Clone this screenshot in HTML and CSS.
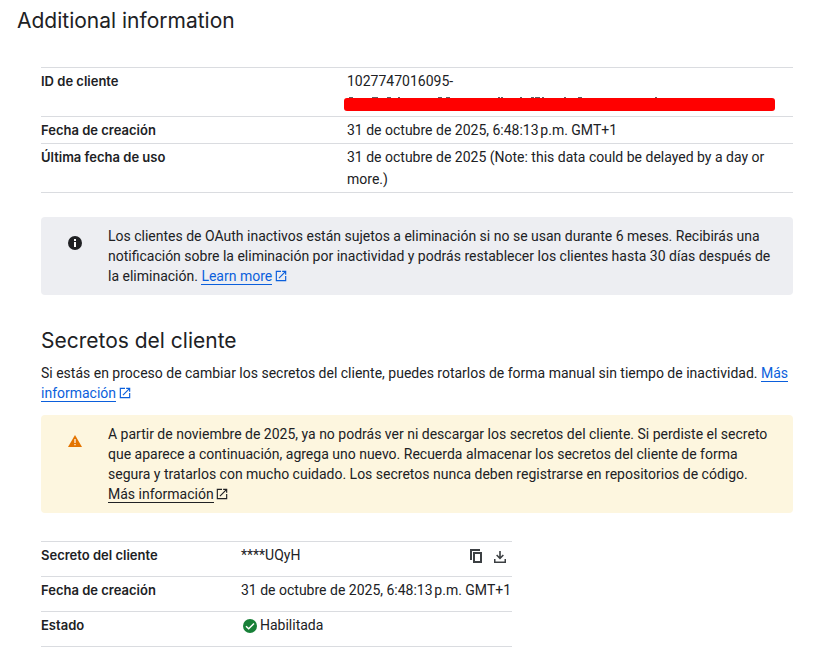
FILE: index.html
```html
<!DOCTYPE html>
<html lang="es">
<head>
<meta charset="utf-8">
<meta name="viewport" content="width=device-width, initial-scale=1">
<title>Additional information</title>
<link rel="stylesheet" href="styles.css">
</head>
<body>
<svg class="sprite" aria-hidden="true">
  <symbol id="open" viewBox="0 0 24 24"><path d="M19 19H5V5h7V3H3v18h18v-9h-2zM14 3v2h3.600l-9.800 9.800 1.400 1.400L19 6.400V10h2V3z"/></symbol>
</svg>
<main class="page">
  <h1 class="title">Additional information</h1>
  <div class="content">
    <table class="details">
      <tr>
        <th scope="row">ID de cliente</th>
        <td>
          <span class="line">1027747016095-</span>
          <svg class="redacted" viewBox="0 0 431 16" preserveAspectRatio="none" aria-label="Oculto">
            <path fill="#5f6063" d="M5 2h4v1H5zM28 2h6v1h-6zM43 2h4v1h-4zM54 2h2v1h-2zM94 2h4v1h-4zM102 2h4v1h-4zM154 2h2v1h-2zM157 2h2v1h-2zM176 2h2v1h-2zM187 2h3v1h-3zM191 2h5v1h-5zM198 2h2v1h-2zM220 2h2v1h-2zM234 2h4v1h-4zM311 2h2v1h-2z"/>
            <rect y="3" width="431" height="13" rx="3" fill="#f00"/>
          </svg>
        </td>
      </tr>
      <tr>
        <th scope="row">Fecha de creación</th>
        <td>31 de octubre de 2025, 6:48:13&#8239;p.m. GMT+1</td>
      </tr>
      <tr>
        <th scope="row">Última fecha de uso</th>
        <td>31 de octubre de 2025 (Note: this data could be delayed by a day or more.)</td>
      </tr>
    </table>

    <aside class="notice info">
      <svg class="notice-icon" viewBox="0 0 14 14" aria-hidden="true"><circle cx="7" cy="7" r="7" fill="#202124"/><path fill="#fff" d="M6 3h2v2H6zM6 6h2v5H6z"/></svg>
      <p>Los clientes de OAuth inactivos están sujetos a eliminación si no se usan durante 6 meses. Recibirás una notificación sobre la eliminación por inactividad y podrás restablecer los clientes hasta 30 días después de la eliminación. <a class="link" href="#"><span class="label">Learn more</span><svg class="open"><use href="#open"/></svg></a></p>
    </aside>

    <h2 class="title">Secretos del cliente</h2>
    <p class="intro">Si estás en proceso de cambiar los secretos del cliente, puedes rotarlos de forma manual sin tiempo de inactividad. <a class="link" href="#"><span class="label">Más información</span><svg class="open"><use href="#open"/></svg></a></p>

    <aside class="notice warning">
      <svg class="notice-icon" viewBox="0 0 14 14" aria-hidden="true"><path fill="#e37400" d="M7 1l7 12H0z"/><path fill="#fff" d="M6.400 5h1.200v4H6.400zM6.400 10h1.200v1.200H6.400z"/></svg>
      <p>A partir de noviembre de 2025, ya no podrás ver ni descargar los secretos del cliente. Si perdiste el secreto que aparece a continuación, agrega uno nuevo. Recuerda almacenar los secretos del cliente de forma segura y tratarlos con mucho cuidado. Los secretos nunca deben registrarse en repositorios de código. <a class="link dark" href="#"><span class="label">Más información</span><svg class="open"><use href="#open"/></svg></a></p>
    </aside>

    <table class="details secret">
      <tr>
        <th scope="row">Secreto del cliente</th>
        <td>
          <div class="value">
            <span>****UQyH</span>
            <span class="actions">
              <button type="button" aria-label="Copiar"><svg viewBox="0 0 16 16"><path fill="none" stroke="#3c4043" stroke-width="2" d="M3 12V2h9M6 5h7v9H6z"/></svg></button>
              <button type="button" aria-label="Descargar"><svg viewBox="0 0 16 16"><path fill="#3c4043" d="M7.200 3h1.600v5.500l2-2 1.100 1.100L8 11.500 4.100 7.600l1.100-1.100 2 2zM2 11h1.500v2.500h9V11H14v4H2z"/></svg></button>
            </span>
          </div>
        </td>
      </tr>
      <tr>
        <th scope="row">Fecha de creación</th>
        <td>31 de octubre de 2025, 6:48:13&#8239;p.m. GMT+1</td>
      </tr>
      <tr>
        <th scope="row">Estado</th>
        <td><span class="status"><svg viewBox="0 0 14 14" aria-hidden="true"><circle cx="7" cy="7" r="7" fill="#188038"/><path fill="none" stroke="#fff" stroke-width="1.500" d="M3 7.200l2.700 2.600L11 4.500"/></svg>Habilitada</span></td>
      </tr>
    </table>
  </div>
</main>
</body>
</html>
```
FILE: styles.css
```css
* { box-sizing: border-box; }

body {
  margin: 0;
  background: #fff;
  color: #202124;
  font: 14px/20px Roboto, sans-serif;
}

p { margin: 0; }

.sprite { display: none; }

.page { padding: 9px 30px 0 17px; }

.content { padding: 34px 0 0 24px; }

.title {
  margin: 0;
  font: 400 21px/24px "Google Sans", Inter, sans-serif;
}

.details {
  width: 100%;
  border-collapse: separate;
  border-spacing: 0;
  border-top: 1px solid #dadce0;
  table-layout: fixed;
  line-height: 22px;
}

.details th,
.details td {
  padding: 2px 0;
  border-bottom: 1px solid #dadce0;
  text-align: left;
  vertical-align: top;
}

.details th {
  width: 306px;
  font-family: "Google Sans", Inter, sans-serif;
  font-size: 13px;
  font-weight: 600;
}

.line { display: block; }

.redacted {
  display: block;
  width: calc(100% - 15px);
  height: 16px;
  margin: 3px 0 3px -3px;
}

.notice {
  display: flex;
  gap: 26px;
  padding: 9px 20px 9px 27px;
  border-radius: 4px;
}

.notice-icon {
  flex: none;
  width: 14px;
  height: 14px;
  margin-top: 10px;
}

.info {
  margin: 24px 0 34px;
  background: #edeef2;
}

.warning {
  margin-bottom: 28px;
  background: #fdf6df;
}

.intro { margin: 10px 0 12px; }

.link {
  color: #0b5fdc;
  text-decoration: none;
}

.link.dark { color: #202124; }

.label { border-bottom: 1px solid currentColor; }

.open {
  width: 14px;
  height: 14px;
  margin-left: 2px;
  fill: currentColor;
  vertical-align: -2px;
}

.dark .open { margin-left: 1px; }

.secret {
  width: 471px;
  max-width: 100%;
}

.secret th { width: 200px; }

.secret th,
.secret td { padding-bottom: 10px; }

.secret td { white-space: nowrap; }

.value {
  display: flex;
  justify-content: space-between;
}

.actions {
  display: flex;
  gap: 8px;
  padding: 4px 4px 0 0;
}

.actions button {
  width: 16px;
  height: 16px;
  padding: 0;
  border: 0;
  background: none;
}

.actions svg { display: block; }

.status {
  display: flex;
  align-items: center;
  gap: 3px;
  padding-left: 2px;
}

.status svg {
  width: 14px;
  height: 14px;
  margin-top: 1px;
}
```
